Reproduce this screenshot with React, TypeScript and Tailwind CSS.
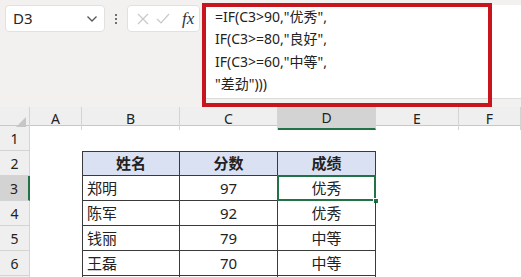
import React from 'react';

const font = "font-['Noto_Sans','Noto_Sans_CJK_SC',sans-serif]";

const cols = ['A', 'B', 'C', 'D', 'E', 'F'];

const rows: { n: number; cells: string[]; head?: boolean }[] = [
  { n: 2, cells: ['姓名', '分数', '成绩'], head: true },
  { n: 3, cells: ['郑明', '97', '优秀'] },
  { n: 4, cells: ['陈军', '92', '优秀'] },
  { n: 5, cells: ['钱丽', '79', '中等'] },
  { n: 6, cells: ['王磊', '70', '中等'] },
  { n: 7, cells: ['', '', ''] },
];

const formula = ['=IF(C3>90,"优秀",', 'IF(C3>=80,"良好",', 'IF(C3>=60,"中等",', '"差劲")))'];

export default function App() {
  return (
    <div className={`relative w-[521px] h-[277px] overflow-hidden bg-white text-[#222] ${font}`}>
      {/* top bar */}
      <div className="h-[107px] bg-[#f3f1ef] flex items-start pt-[5px] pl-[5px]">
        <div className="w-[100px] h-[27px] bg-white rounded-[4px] border border-[#e3e1df] flex items-center justify-between pl-[7px] pr-[6px]">
          <span className="text-[15px] text-[#262626]">D3</span>
          <svg width="12" height="8" viewBox="0 0 12 8" fill="none" stroke="#555" strokeWidth="1.3">
            <path d="M1.5 1.5 L6 6 L10.5 1.5" />
          </svg>
        </div>
        <div className="w-[22px] h-[27px] flex flex-col items-center justify-center gap-[2px]">
          <span className="w-[2px] h-[2px] bg-[#444] rounded-full" />
          <span className="w-[2px] h-[2px] bg-[#444] rounded-full" />
          <span className="w-[2px] h-[2px] bg-[#444] rounded-full" />
        </div>
        <div className="w-[73px] h-[27px] bg-white rounded-[4px] border border-[#e3e1df] flex items-center pl-[9px] gap-[7px]">
          <svg width="12" height="12" viewBox="0 0 12 12" stroke="#c8c8c8" strokeWidth="1.2">
            <path d="M1 1 L11 11 M11 1 L1 11" />
          </svg>
          <svg width="14" height="11" viewBox="0 0 14 11" fill="none" stroke="#c8c8c8" strokeWidth="1.2">
            <path d="M1 6 L5 10 L13 1" />
          </svg>
          <span className="ml-[5px] text-[17px] italic font-['Liberation_Serif',serif] text-[#333] leading-none">fx</span>
        </div>
        <div className="ml-[5px] flex-1 h-[94px] bg-white border-b border-[#dcdcdc] pl-[10px] pt-[1px]">
          {formula.map((l, i) => (
            <div key={i} className="text-[14px] leading-[22.4px] text-[#222] whitespace-pre">
              {l}
            </div>
          ))}
        </div>
      </div>

      {/* red annotation */}
      <div className="absolute left-[202px] top-[3px] w-[290px] h-[104px] border-[4px] border-[#c8141c]" />

      {/* column headers */}
      <div className="grid grid-cols-[30px_52px_98px_98px_98px_83px_1fr] h-[19px] bg-[#efefef] border-b border-[#c8c8c8]">
        <div className="relative border-r border-[#d4d4d4]">
          <svg className="absolute right-[3px] bottom-[3px]" width="10" height="10" viewBox="0 0 10 10">
            <path d="M10 0 L10 10 L0 10 Z" fill="#c6c6c6" />
          </svg>
        </div>
        {cols.map((c) => (
          <div
            key={c}
            className={`flex items-center justify-center text-[14px] border-r border-[#d4d4d4] ${
              c === 'D' ? 'bg-[#d3d3d3] border-b-2 border-b-[#217346]' : ''
            }`}
          >
            {c}
          </div>
        ))}
      </div>

      {/* row 1 */}
      <div className="grid grid-cols-[30px_1fr] h-[25px]">
        <div className="bg-[#efefef] border-r border-b border-[#d4d4d4] flex items-center justify-center text-[14px]">1</div>
        <div />
      </div>

      {rows.map((r) => (
        <div key={r.n} className="grid grid-cols-[30px_52px_98px_98px_98px_1fr] h-[25px]">
          <div
            className={`flex items-center justify-center text-[14px] border-b border-[#d4d4d4] ${
              r.n === 3 ? 'bg-[#d3d3d3] border-r-2 border-r-[#217346]' : 'bg-[#efefef] border-r'
            }`}
          >
            {r.n < 7 ? r.n : ''}
          </div>
          <div />
          {r.cells.map((c, i) => {
            const sel = r.n === 3 && i === 2;
            return (
              <div
                key={i}
                className={`relative flex items-center text-[15px] border-b border-r border-[#3a3a3a] ${
                  i === 0 ? 'border-l' : ''
                } ${i === 0 && !r.head ? 'justify-start pl-[4px]' : 'justify-center'} ${
                  r.head ? 'border-t bg-[#d9e1f2] font-bold' : ''
                }`}
              >
                {c}
                {sel && (
                  <>
                    <div className="absolute -left-[1px] -top-[1px] -right-[1px] -bottom-[1px] border-2 border-[#217346]" />
                    <div className="absolute -right-[4px] -bottom-[4px] w-[6px] h-[6px] bg-[#217346] border border-white" />
                  </>
                )}
              </div>
            );
          })}
          <div />
        </div>
      ))}
    </div>
  );
}
